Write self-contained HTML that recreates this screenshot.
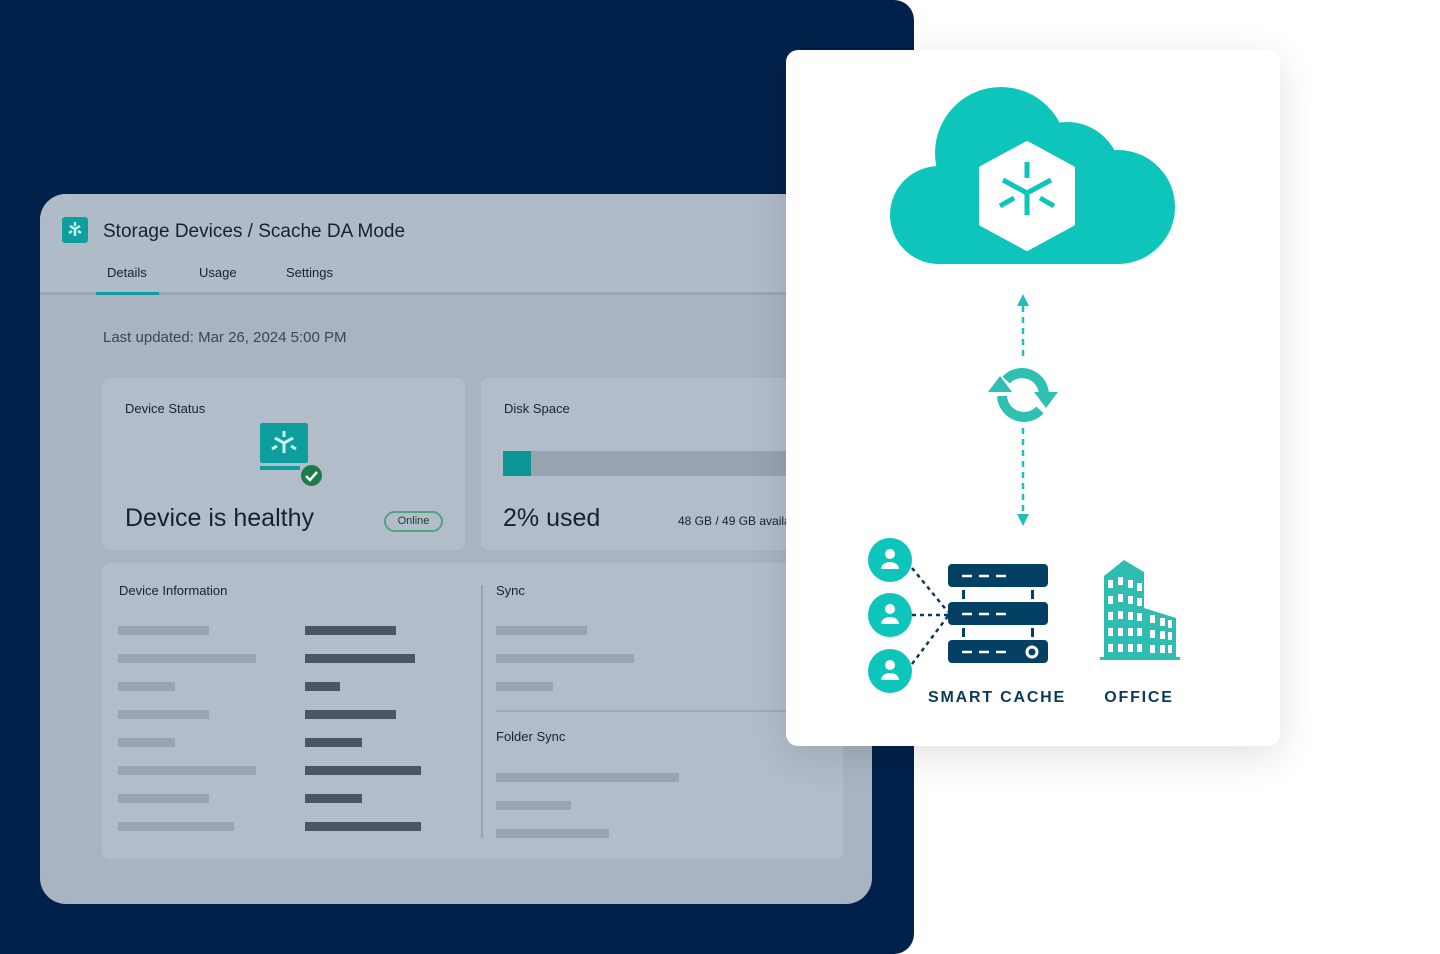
<!DOCTYPE html>
<html><head><meta charset="utf-8"><style>
*{margin:0;padding:0;box-sizing:border-box}
body{width:1440px;height:954px;background:#fff;position:relative;overflow:hidden;font-family:"Liberation Sans",sans-serif}
.abs{position:absolute}
.navy{left:0;top:0;width:914px;height:954px;background:#00224a;border-radius:0 20px 20px 0}
.panel{left:40px;top:194px;width:832px;height:710px;background:#a9b4c2;border-radius:26px;overflow:hidden}
.hdr{left:0;top:0;width:832px;height:101px;background:#b0bbc8;border-bottom:3px solid #9ba6b4}
.card{background:#b3bdca;border-radius:8px}
.t{color:#152235}
.lb{background:#99a4b1;height:9px}
.db{background:#4a5666;height:9px}
</style></head><body>
<div class="abs navy"></div>
<div class="abs panel">
 <div class="abs hdr">
  <div class="abs" style="left:22px;top:23px;width:26px;height:26px;background:#0f9e9e;border-radius:3px"></div>
  <svg class="abs" style="left:22px;top:23px" width="26" height="26" viewBox="0 0 26 26"><g stroke="#cfe" stroke-width="2.4" fill="none"><path d="M13 5v4M8 9l5 3 5-3M13 12v7M7 16l3-2M19 16l-3-2"/></g></svg>
  <div class="abs t" style="left:63px;top:27px;font-size:19px">Storage Devices / Scache DA Mode</div>
  <div class="abs t" style="left:67px;top:71px;font-size:13px">Details</div>
  <div class="abs t" style="left:159px;top:71px;font-size:13px">Usage</div>
  <div class="abs t" style="left:246px;top:71px;font-size:13px">Settings</div>
  <div class="abs" style="left:56px;top:98px;width:63px;height:3px;background:#0f9e9e"></div>
 </div>
 <div class="abs" style="left:63px;top:135px;font-size:15px;color:#3a4656">Last updated: Mar 26, 2024 5:00 PM</div>
</div>
<div class="abs card" style="left:102px;top:378px;width:363px;height:172px">
 <div class="abs t" style="left:23px;top:23px;font-size:13px">Device Status</div>
 <div class="abs" style="left:158px;top:45px;width:48px;height:40px;background:#0f9e9e;border-radius:2px"></div>
 <div class="abs" style="left:158px;top:88px;width:40px;height:4px;background:#0f9e9e"></div>
 <svg class="abs" style="left:158px;top:45px" width="48" height="40" viewBox="0 0 48 40"><g stroke="#cfe" stroke-width="3" fill="none"><path d="M24 8v6M15 15l9 5 9-5M24 20v10M12 26l5-3M36 26l-5-3"/></g></svg>
 <div class="abs" style="left:197px;top:85px;width:25px;height:25px;border-radius:50%;background:#1d7a4a;border:2px solid #b3bdca"></div>
 <svg class="abs" style="left:197px;top:85px" width="25" height="25"><path d="M7 13l4 4 7-8" stroke="#fff" stroke-width="2.5" fill="none"/></svg>
 <div class="abs t" style="left:23px;top:126px;font-size:25px">Device is healthy</div>
 <div class="abs" style="left:282px;top:133px;width:59px;height:21px;border:2px solid #4fa580;border-radius:11px;font-size:11px;color:#1a3a30;text-align:center;line-height:17px">Online</div>
</div>
<div class="abs card" style="left:481px;top:378px;width:380px;height:172px">
 <div class="abs t" style="left:23px;top:23px;font-size:13px">Disk Space</div>
 <div class="abs" style="left:22px;top:73px;width:340px;height:25px;background:#98a3b0"></div>
 <div class="abs" style="left:22px;top:73px;width:28px;height:25px;background:#0b9696"></div>
 <div class="abs t" style="left:22px;top:126px;font-size:25px">2% used</div>
 <div class="abs t" style="left:197px;top:136px;font-size:12px">48 GB / 49 GB available</div>
</div>
<div class="abs card" style="left:102px;top:563px;width:741px;height:296px">
 <div class="abs t" style="left:17px;top:20px;font-size:13px">Device Information</div>
 <div class="abs" style="left:379px;top:22px;width:2px;height:253px;background:#98a3b0"></div>
 <div class="abs t" style="left:394px;top:20px;font-size:13px">Sync</div>
 <div class="abs" style="left:394px;top:147px;width:347px;height:2px;background:#9ea9b6"></div>
 <div class="abs t" style="left:394px;top:166px;font-size:13px">Folder Sync</div>
</div>
<div class="abs lb" style="left:118px;top:626px;width:91px"></div><div class="abs db" style="left:305px;top:626px;width:91px"></div>
<div class="abs lb" style="left:118px;top:654px;width:138px"></div><div class="abs db" style="left:305px;top:654px;width:110px"></div>
<div class="abs lb" style="left:118px;top:682px;width:57px"></div><div class="abs db" style="left:305px;top:682px;width:35px"></div>
<div class="abs lb" style="left:118px;top:710px;width:91px"></div><div class="abs db" style="left:305px;top:710px;width:91px"></div>
<div class="abs lb" style="left:118px;top:738px;width:57px"></div><div class="abs db" style="left:305px;top:738px;width:57px"></div>
<div class="abs lb" style="left:118px;top:766px;width:138px"></div><div class="abs db" style="left:305px;top:766px;width:116px"></div>
<div class="abs lb" style="left:118px;top:794px;width:91px"></div><div class="abs db" style="left:305px;top:794px;width:57px"></div>
<div class="abs lb" style="left:118px;top:822px;width:116px"></div><div class="abs db" style="left:305px;top:822px;width:116px"></div>
<div class="abs lb" style="left:496px;top:626px;width:91px"></div>
<div class="abs lb" style="left:496px;top:654px;width:138px"></div>
<div class="abs lb" style="left:496px;top:682px;width:57px"></div>
<div class="abs lb" style="left:496px;top:773px;width:183px"></div>
<div class="abs lb" style="left:496px;top:801px;width:75px"></div>
<div class="abs lb" style="left:496px;top:829px;width:113px"></div>

<div class="abs" style="left:786px;top:50px;width:494px;height:696px;background:#fff;border-radius:12px;box-shadow:0 10px 40px rgba(0,0,0,.12)"></div>
<svg class="abs" style="left:0;top:0" width="1440" height="954">
 <g fill="#0ec5bb">
  <circle cx="1001" cy="153" r="66"/>
  <circle cx="1067" cy="176" r="54"/>
  <circle cx="1118" cy="207" r="57"/>
  <circle cx="939" cy="215" r="49"/>
  <rect x="939" y="170" width="180" height="94"/>
 </g>
 <path d="M1027 143l46 25v56l-46 25-46-25v-56z" fill="#fff" stroke="#fff" stroke-width="4" stroke-linejoin="round"/>
 <g stroke="#0ec5bb" stroke-width="5" fill="none">
  <path d="M1027 162v16M1003 180l24 13 24-13M1027 193v22M1000 206l14-8M1054 206l-14-8"/>
 </g>
 <g stroke="#23bfb6" stroke-width="2.5" stroke-dasharray="6 5" fill="none">
  <path d="M1023 306v52M1023 428v86"/>
 </g>
 <path d="M1017 306l6-12 6 12z M1017 514l6 12 6-12z" fill="#23bfb6"/>
 <g fill="none" stroke="#2fbfb3" stroke-width="10">
  <path d="M1006 380 A22 22 0 0 1 1044 396"/>
  <path d="M1040 410 A22 22 0 0 1 1002 396"/>
 </g>
 <path d="M988 392l12-16 12 16z M1058 392l-12 16-12-16z" fill="#2fbfb3"/>
 <g fill="#0ec5bb"><circle cx="890" cy="560" r="22"/><circle cx="890" cy="615" r="22"/><circle cx="890" cy="671" r="22"/></g>
 <g fill="#fff">
  <circle cx="890" cy="554" r="5"/><path d="M881 569a9 7 0 0 1 18 0z"/>
  <circle cx="890" cy="609" r="5"/><path d="M881 624a9 7 0 0 1 18 0z"/>
  <circle cx="890" cy="665" r="5"/><path d="M881 680a9 7 0 0 1 18 0z"/>
 </g>
 <g stroke="#0d3a5c" stroke-width="2.5" stroke-dasharray="4 4" fill="none">
  <path d="M912 568l36 44M912 615h36M912 664l36 -48"/>
 </g>
 <g fill="#034063">
  <rect x="948" y="564" width="100" height="23" rx="4"/>
  <rect x="948" y="602" width="100" height="23" rx="4"/>
  <rect x="948" y="640" width="100" height="23" rx="4"/>
  <rect x="962" y="590" width="3" height="9"/><rect x="1031" y="590" width="3" height="9"/>
  <rect x="962" y="628" width="3" height="9"/><rect x="1031" y="628" width="3" height="9"/>
 </g>
 <g stroke="#fff" stroke-width="2.5" stroke-dasharray="10 7" fill="none">
  <path d="M962 576h44M962 614h44M962 652h44"/>
 </g>
 <circle cx="1032" cy="652" r="5" fill="none" stroke="#fff" stroke-width="3"/>
 <g fill="#2fbdb1">
  <path d="M1104 576l20-16 20 12v88h-40z"/>
  <path d="M1144 608l32 10v42h-32z"/>
  <rect x="1100" y="657" width="80" height="3"/>
 </g>
 <g fill="#fff">
  <rect x="1108" y="580" width="5" height="8"/><rect x="1118" y="577" width="5" height="8"/><rect x="1128" y="580" width="5" height="8"/><rect x="1137" y="583" width="5" height="8"/>
  <rect x="1108" y="596" width="5" height="8"/><rect x="1118" y="594" width="5" height="8"/><rect x="1128" y="596" width="5" height="8"/><rect x="1137" y="598" width="5" height="8"/>
  <rect x="1108" y="612" width="5" height="8"/><rect x="1118" y="611" width="5" height="8"/><rect x="1128" y="612" width="5" height="8"/><rect x="1137" y="613" width="5" height="8"/><rect x="1150" y="615" width="5" height="8"/><rect x="1160" y="618" width="5" height="8"/><rect x="1168" y="620" width="4" height="8"/>
  <rect x="1108" y="628" width="5" height="8"/><rect x="1118" y="628" width="5" height="8"/><rect x="1128" y="628" width="5" height="8"/><rect x="1137" y="628" width="5" height="8"/><rect x="1150" y="630" width="5" height="8"/><rect x="1160" y="631" width="5" height="8"/><rect x="1168" y="632" width="4" height="8"/>
  <rect x="1108" y="644" width="5" height="8"/><rect x="1118" y="644" width="5" height="8"/><rect x="1128" y="644" width="5" height="8"/><rect x="1137" y="644" width="5" height="8"/><rect x="1150" y="645" width="5" height="8"/><rect x="1160" y="645" width="5" height="8"/><rect x="1168" y="645" width="4" height="8"/>
 </g>
 <text x="997" y="702" text-anchor="middle" font-family="Liberation Sans" font-weight="bold" font-size="16" letter-spacing="1.8" fill="#0d3a5c">SMART CACHE</text>
 <text x="1139" y="702" text-anchor="middle" font-family="Liberation Sans" font-weight="bold" font-size="16" letter-spacing="1.8" fill="#0d3a5c">OFFICE</text>
</svg>
</body></html>
